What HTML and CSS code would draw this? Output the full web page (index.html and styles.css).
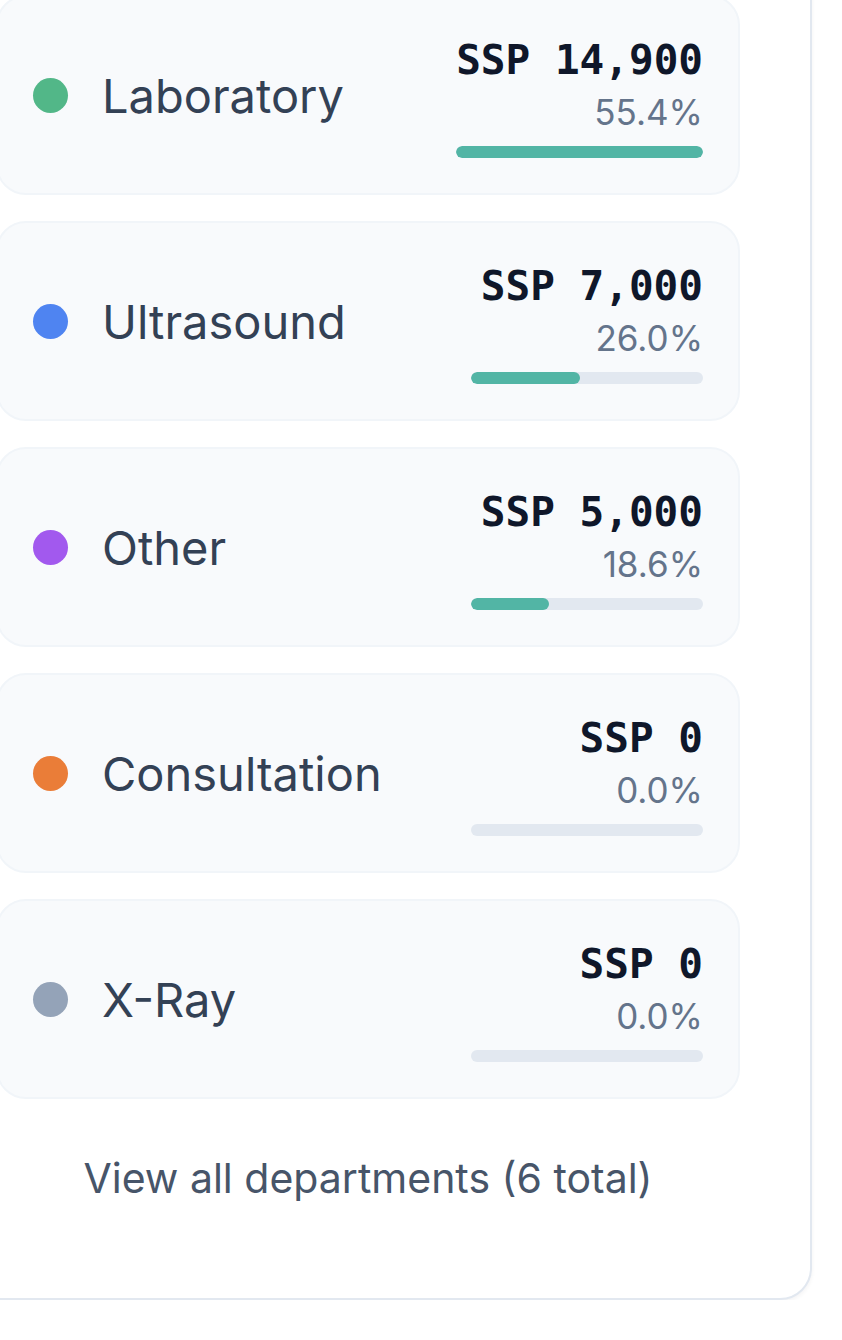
FILE: index.html
```html
<!DOCTYPE html>
<html lang="en">
<head>
<meta charset="utf-8">
<title>Departments</title>
<link rel="stylesheet" href="styles.css">
</head>
<body>
<div class="card">
  <ul class="dept-list">
    <li class="dept">
      <div class="dept-name"><span class="dot dot-green"></span><span class="label">Laboratory</span></div>
      <div class="dept-stats">
        <div class="amount">SSP 14,900</div>
        <div class="pct">55.4%</div>
        <div class="track"><div class="fill" style="width:100%"></div></div>
      </div>
    </li>
    <li class="dept">
      <div class="dept-name"><span class="dot dot-blue"></span><span class="label">Ultrasound</span></div>
      <div class="dept-stats">
        <div class="amount">SSP 7,000</div>
        <div class="pct">26.0%</div>
        <div class="track"><div class="fill" style="width:47%"></div></div>
      </div>
    </li>
    <li class="dept">
      <div class="dept-name"><span class="dot dot-purple"></span><span class="label">Other</span></div>
      <div class="dept-stats">
        <div class="amount">SSP 5,000</div>
        <div class="pct">18.6%</div>
        <div class="track"><div class="fill" style="width:33.6%"></div></div>
      </div>
    </li>
    <li class="dept">
      <div class="dept-name"><span class="dot dot-orange"></span><span class="label">Consultation</span></div>
      <div class="dept-stats">
        <div class="amount">SSP 0</div>
        <div class="pct">0.0%</div>
        <div class="track"><div class="fill" style="width:0%"></div></div>
      </div>
    </li>
    <li class="dept">
      <div class="dept-name"><span class="dot dot-gray"></span><span class="label">X-Ray</span></div>
      <div class="dept-stats">
        <div class="amount">SSP 0</div>
        <div class="pct">0.0%</div>
        <div class="track"><div class="fill" style="width:0%"></div></div>
      </div>
    </li>
  </ul>
  <button class="view-all" type="button">View all departments (6 total)</button>
</div>
</body>
</html>
```
FILE: styles.css
```css
html, body {
  margin: 0;
  padding: 0;
  background: #ffffff;
}

body {
  font-family: Inter, "Noto Sans", sans-serif;
  overflow: hidden;
}

.card {
  box-sizing: border-box;
  width: 888px;
  margin: -80px 0 0 -76px;
  padding: 73px 70px 40px 70px;
  background: #ffffff;
  border: 2px solid #e2e8f0;
  border-radius: 32px;
  box-shadow: 0 2px 4px rgba(15, 23, 42, 0.05);
}

.dept-list {
  list-style: none;
  margin: 0;
  padding: 0;
  display: flex;
  flex-direction: column;
  gap: 26px;
}

.dept {
  box-sizing: border-box;
  display: flex;
  align-items: center;
  justify-content: space-between;
  padding: 35px 35px 35px 35px;
  background: #f8fafc;
  border: 2px solid #f1f5f9;
  border-radius: 30px;
}

.dept-name {
  display: flex;
  align-items: center;
  gap: 34px;
}

.dot {
  width: 35px;
  height: 35px;
  border-radius: 50%;
  flex: none;
}

.dot-green { background: #52b788; }
.dot-blue { background: #4f84f1; }
.dot-purple { background: #a259ee; }
.dot-orange { background: #ea7d38; }
.dot-gray { background: #94a3b8; }

.label {
  font-size: 47px;
  color: #334155;
}

.dept-stats {
  display: flex;
  flex-direction: column;
  align-items: flex-end;
  min-width: 232px;
}

.amount {
  font-family: "DejaVu Sans Mono", "Liberation Mono", monospace;
  font-weight: 700;
  font-size: 41px;
  line-height: 56px;
  color: #0f172a;
  white-space: nowrap;
}

.pct {
  font-size: 35px;
  line-height: 40px;
  margin-top: 4px;
  color: #64748b;
}

.track {
  align-self: stretch;
  height: 12px;
  margin-top: 14px;
  background: #e2e8f0;
  border-radius: 6px;
  overflow: hidden;
}

.fill {
  height: 100%;
  background: #52b5a5;
  border-radius: 6px;
}

.view-all {
  display: block;
  width: 100%;
  margin: 44px 0 0;
  padding: 10px 0 55px;
  border: 0;
  background: transparent;
  font-family: Inter, "Noto Sans", sans-serif;
  font-size: 41px;
  color: #475569;
  text-align: center;
  cursor: pointer;
}
```
